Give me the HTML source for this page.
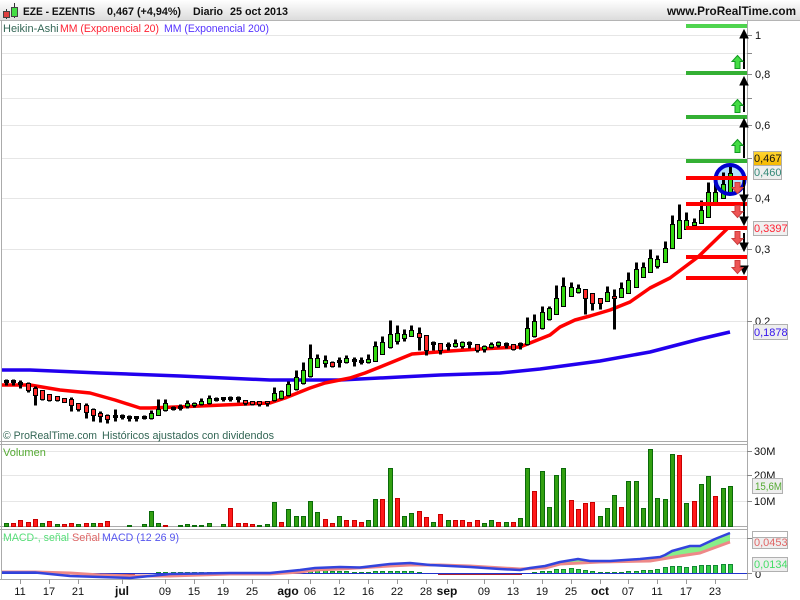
<!DOCTYPE html>
<html><head><meta charset="utf-8"><title>EZE - EZENTIS</title>
<style>html,body{margin:0;padding:0;background:#fff;width:800px;height:600px;overflow:hidden}svg{display:block}text{font-family:"Liberation Sans",sans-serif;font-size:11px;fill:#111}</style></head>
<body>
<svg width="800" height="600" viewBox="0 0 800 600" xmlns="http://www.w3.org/2000/svg">
<defs>
<linearGradient id="hd" x1="0" y1="0" x2="0" y2="1"><stop offset="0" stop-color="#fff"/><stop offset="1" stop-color="#dcdcdc"/></linearGradient>
<linearGradient id="gold" x1="0" y1="0" x2="0" y2="1"><stop offset="0" stop-color="#ffd633"/><stop offset="1" stop-color="#f5b800"/></linearGradient>
</defs>
<rect width="800" height="20" fill="url(#hd)"/>
<path d="M0 20.5H800" stroke="#b4b4b4"/>
<!-- logo -->
<path d="M6.5 9V19" stroke="#333"/><rect x="3.5" y="11.5" width="6" height="6" fill="#e04040" stroke="#444"/>
<path d="M14.5 3V18" stroke="#333"/><rect x="11.500" y="7.500" width="6" height="9" fill="#44dd44" stroke="#444"/>
<text x="23" y="15" font-weight="bold" textLength="72" lengthAdjust="spacingAndGlyphs">EZE - EZENTIS</text>
<text x="107" y="15" font-weight="bold" textLength="74" lengthAdjust="spacingAndGlyphs">0,467 (+4,94%)</text>
<text x="193" y="15" font-weight="bold" textLength="30" lengthAdjust="spacingAndGlyphs">Diario</text>
<text x="230" y="15" font-weight="bold" textLength="58" lengthAdjust="spacingAndGlyphs">25 oct 2013</text>
<text x="667" y="15" font-weight="bold" style="font-size:12px" textLength="129" lengthAdjust="spacingAndGlyphs">www.ProRealTime.com</text>
<text x="3" y="32" style="fill:#336655">Heikin-Ashi</text>
<text x="60" y="32" style="fill:#ff2233" textLength="99" lengthAdjust="spacingAndGlyphs">MM (Exponencial 20)</text>
<text x="164" y="32" style="fill:#5533ff" textLength="105" lengthAdjust="spacingAndGlyphs">MM (Exponencial 200)</text>

<!-- grid -->
<path d="M2 35.5H747M2 53.5H747M2 74.5H747M2 98.5H747M2 125.5H747M2 158.5H747M2 198.5H747M2 249.5H747M2 321.5H747M2 451.5H747M2 475.5H747M2 501.5H747M2 538.5H747" stroke="#e6e6e6"/>
<!-- panel borders -->
<path d="M1.5 20V579M747.5 20V579M0 441.5H748M0 444.5H748M0 526.5H748M0 529.5H748M0 579.5H748" stroke="#ababab"/>
<!-- ticks -->
<path d="M747 35.5H752M747 53.5H752M747 74.5H752M747 98.5H752M747 125.5H752M747 158.5H752M747 198.5H752M747 249.5H752M747 321.5H752M747 451.5H752M747 475.5H752M747 501.5H752M747 538.5H752M747 573.5H752" stroke="#888"/>
<path d="M20.5 579V584M49.5 579V584M78.5 579V584M122.5 579V584M165.5 579V584M194.5 579V584M223.5 579V584M252.5 579V584M288.5 579V584M310.5 579V584M339.5 579V584M368.5 579V584M397.5 579V584M426.5 579V584M447.5 579V584M484.5 579V584M513.5 579V584M542.5 579V584M571.5 579V584M600.5 579V584M628.5 579V584M657.5 579V584M686.5 579V584M715.5 579V584" stroke="#999"/>

<!-- MA200 -->
<path d="M2 370L30 370L100 373L180 376L270 380L340 380L400 377L440 375L500 373L540 369L600 361L650 352L700 339L730 332" fill="none" stroke="#2200ee" stroke-width="3.5" stroke-linejoin="round"/>
<!-- MA20 -->
<circle cx="730" cy="179.500" r="15" fill="#b4e2ff"/>
<path d="M2 385L30 385L60 390L90 393L115 400L140 408L150 408L200 406L270 403L285 398L310 388L325 383L350 378L365 373L385 365L412 354L450 351L480 349L520 347L530 343L550 335L560 327L575 320L590 316L610 310L630 302L650 288L670 278L698 257L728 228" fill="none" stroke="#ff0000" stroke-width="3.500" stroke-linejoin="round"/>

<!-- candles -->
<g transform="translate(.5,.5)">
<path fill="none" stroke="#000" stroke-width="3" d="M6 379V385M13 379V385M20 380V388M28 382V392M35 386V405M42 390V400M49 394V401M57 396V401M64 398V402M71 397V411M78 403V411M86 403V418M93 408V421M100 411V422M107 414V423M115 409V421M122 414V419M129 415V421M136 416V421M144 415V419M151 410V419M158 399V415M165 399V411M173 406V410M180 404V410M187 400V408M194 402V407M201 398V405M209 395V404M216 397V401M223 397V401M230 396V401M238 396V402M245 400V405M252 401V405M259 401V406M267 401V406M274 387V401M281 390V399M288 381V396M296 370V390M303 362V384M310 344V377M317 354V367M325 355V367M332 361V367M339 357V367M346 355V363M354 357V366M361 357V364M368 354V363M375 341V361M382 336V354M390 320V348M397 325V344M404 329V341M411 325V336M419 327V350M426 335V355M433 341V350M440 343V354M448 342V350M455 339V347M462 341V348M469 341V348M477 344V352M484 345V352M491 342V348M498 341V347M506 342V348M513 344V350M520 342V349M527 317V345M534 314V337M542 306V329M549 306V320M556 285V314M563 277V306M571 282V296M578 284V293M585 289V314M592 293V310M600 298V309M607 286V301M614 289V329M621 282V297M628 272V293M636 262V287M643 262V277M650 249V272M657 255V268M665 241V262M672 215V248M679 204V238M686 212V229M694 218V226M701 200V223M708 182V217M715 180V202M723 172V198M730 166V192"/>
<path fill="#000" stroke="#000" d="M4 380h4v2h-4zM11 380h4v2h-4zM18 382h4v2h-4zM113 415h4v2h-4zM120 415h4v2h-4zM127 416h4v2h-4zM134 416h4v2h-4zM142 416h4v2h-4zM171 407h4v2h-4zM178 406h4v2h-4zM214 398h4v2h-4zM221 397h4v2h-4zM228 397h4v2h-4zM236 397h4v2h-4zM337 360h4v2h-4zM352 359h4v2h-4zM359 360h4v2h-4zM431 342h4v2h-4zM446 344h4v2h-4zM467 342h4v2h-4zM504 343h4v2h-4zM518 343h4v2h-4z"/>
<path fill="#ff2a2a" stroke="#000" d="M26 383h4V390h-4zM33 388h4V395h-4zM40 390h4V399h-4zM47 394h4V400h-4zM55 396h4V400h-4zM62 398h4V402h-4zM69 399h4V405h-4zM76 403h4V409h-4zM84 405h4V412h-4zM91 409h4V415h-4zM98 413h4V416h-4zM105 415h4V419h-4zM243 400h4V403h-4zM250 401h4V404h-4zM257 401h4V404h-4zM265 401h4V403h-4zM330 362h4V366h-4zM417 333h4V337h-4zM424 335h4V350h-4zM438 343h4V350h-4zM475 344h4V350h-4zM511 344h4V349h-4zM583 289h4V298h-4zM590 293h4V303h-4zM598 298h4V303h-4zM612 296h4V298h-4z"/>
<path fill="#33d80f" stroke="#000" d="M149 413h4V418h-4zM156 409h4V415h-4zM163 403h4V410h-4zM185 403h4V406h-4zM192 403h4V405h-4zM199 401h4V404h-4zM207 398h4V403h-4zM272 393h4V400h-4zM279 391h4V398h-4zM286 384h4V395h-4zM294 377h4V389h-4zM301 370h4V383h-4zM308 358h4V376h-4zM315 358h4V367h-4zM323 360h4V363h-4zM344 358h4V362h-4zM366 359h4V362h-4zM373 346h4V361h-4zM380 342h4V354h-4zM388 334h4V347h-4zM395 333h4V341h-4zM402 334h4V338h-4zM409 330h4V336h-4zM453 343h4V346h-4zM460 342h4V346h-4zM482 346h4V349h-4zM489 344h4V347h-4zM496 342h4V345h-4zM525 328h4V344h-4zM532 321h4V336h-4zM540 312h4V328h-4zM547 308h4V319h-4zM554 298h4V314h-4zM561 286h4V306h-4zM569 287h4V296h-4zM576 288h4V292h-4zM605 292h4V301h-4zM619 288h4V297h-4zM626 280h4V293h-4zM634 269h4V287h-4zM641 267h4V277h-4zM648 258h4V272h-4zM655 259h4V266h-4zM663 248h4V262h-4zM670 224h4V248h-4zM677 220h4V238h-4zM684 220h4V229h-4zM692 222h4V225h-4zM699 210h4V223h-4zM706 192h4V217h-4zM713 192h4V202h-4zM721 184h4V198h-4zM728 173h4V192h-4z"/>
</g>

<circle cx="730" cy="179.500" r="14.500" fill="none" stroke="#0000cc" stroke-width="4"/>

<!-- support / resistance -->
<g fill="#34b034">
<rect x="686" y="24" width="61" height="4" fill="#4fd44f"/><rect x="686" y="71" width="61" height="4"/><rect x="686" y="115" width="61" height="4"/><rect x="686" y="159" width="61" height="4"/>
</g>
<g fill="#ff0000">
<rect x="686" y="176" width="61" height="4"/><rect x="686" y="202" width="61" height="4"/><rect x="686" y="226" width="61" height="4"/><rect x="686" y="255" width="61" height="4"/><rect x="686" y="276" width="61" height="4"/>
</g>

<!-- black arrows -->
<g fill="#000" stroke="#000">
<path d="M744 69V36" stroke-width="2" fill="none"/><path d="M744 30l4 8h-8z"/>
<path d="M744 112V83" stroke-width="2" fill="none"/><path d="M744 77l4 8h-8z"/>
<path d="M744 158V126" stroke-width="2" fill="none"/><path d="M744 119l4 8h-8z"/>
<path d="M744 180V197" stroke-width="2" fill="none"/><path d="M744 203l4-8h-8z"/>
<path d="M744 203V219" stroke-width="2" fill="none"/><path d="M744 225l4-8h-8z"/>
<path d="M744 233V245" stroke-width="2" fill="none"/><path d="M744 251l4-8h-8z"/>
<path d="M744 266V268" stroke-width="2" fill="none"/><path d="M744 274l4-8h-8z"/>
</g>
<!-- green arrows -->
<g fill="#44dd44" stroke="#119922">
<path d="M737.500 55.500l5.500 6h-3v7h-5v-7h-3z"/>
<path d="M737.500 99.500l5.500 6h-3v7h-5v-7h-3z"/>
<path d="M737.500 139.500l5.500 6h-3v7h-5v-7h-3z"/>
</g>
<!-- red arrows -->
<g fill="#ee5555" stroke="#cc3c3c">
<path d="M735 182.500h5v5h3l-5.500 6-5.500-6h3z"/>
<path d="M735 205.500h5v6h3l-5.500 6-5.500-6h3z"/>
<path d="M735 231.500h5v7h3l-5.500 6-5.500-6h3z"/>
<path d="M735 260.500h5v7h3l-5.500 6-5.500-6h3z"/>
</g>

<!-- axis labels -->
<text x="755" y="39">1</text>
<text x="755" y="78">0,8</text>
<text x="755" y="129">0,6</text>
<text x="755" y="202">0,4</text>
<text x="755" y="253">0,3</text>
<text x="755" y="325">0,2</text>
<rect x="753.500" y="151.500" width="28" height="14" fill="url(#gold)" stroke="#b0b0b0"/>
<text x="754" y="162">0,467</text>
<rect x="753.500" y="165.500" width="28" height="14" fill="#eee" stroke="#b0b0b0"/>
<text x="754" y="176" style="fill:#338877">0,460</text>
<rect x="753.500" y="221.500" width="34" height="14" fill="#f0f0f0" stroke="#b0b0b0"/>
<text x="754" y="232" style="fill:#ff2233">0,3397</text>
<rect x="753.500" y="324.500" width="34" height="15" fill="#eee" stroke="#b0b0b0"/>
<text x="754" y="336" style="fill:#3311ee">0,1878</text>

<text x="3" y="439" style="fill:#336655" textLength="94" lengthAdjust="spacingAndGlyphs">© ProRealTime.com</text>
<text x="102" y="439" style="fill:#336655" textLength="172" lengthAdjust="spacingAndGlyphs">Históricos ajustados con dividendos</text>

<!-- volume -->
<text x="3" y="456" style="fill:#55aa33">Volumen</text>
<g transform="translate(.5,.5)">
<path fill="#33a011" stroke="#0a6a0a" d="M4 523h4V526h-4zM40 523h4V526h-4zM55 524h4V526h-4zM76 524h4V526h-4zM91 523h4V526h-4zM127 525h4V526h-4zM142 524h4V526h-4zM149 511h4V526h-4zM156 523h4V526h-4zM178 525h4V526h-4zM185 524h4V526h-4zM192 525h4V526h-4zM199 525h4V526h-4zM207 523h4V526h-4zM221 524h4V526h-4zM257 525h4V526h-4zM265 524h4V526h-4zM272 502h4V526h-4zM286 509h4V526h-4zM294 516h4V526h-4zM301 516h4V526h-4zM308 501h4V526h-4zM315 512h4V526h-4zM337 516h4V526h-4zM366 520h4V526h-4zM373 499h4V526h-4zM388 468h4V526h-4zM402 516h4V526h-4zM409 513h4V526h-4zM431 522h4V526h-4zM446 520h4V526h-4zM482 523h4V526h-4zM489 520h4V526h-4zM504 522h4V526h-4zM518 518h4V526h-4zM525 468h4V526h-4zM540 471h4V526h-4zM547 507h4V526h-4zM554 475h4V526h-4zM561 468h4V526h-4zM598 516h4V526h-4zM605 508h4V526h-4zM612 495h4V526h-4zM626 481h4V526h-4zM634 481h4V526h-4zM641 508h4V526h-4zM648 449h4V526h-4zM655 498h4V526h-4zM663 499h4V526h-4zM670 454h4V526h-4zM684 503h4V526h-4zM699 484h4V526h-4zM706 476h4V526h-4zM721 488h4V526h-4zM728 486h4V526h-4z"/>
<path fill="#ff1a1a" stroke="#c80000" d="M11 523h4V526h-4zM18 520h4V526h-4zM26 522h4V526h-4zM33 519h4V526h-4zM47 521h4V526h-4zM62 524h4V526h-4zM69 523h4V526h-4zM84 523h4V526h-4zM98 523h4V526h-4zM105 521h4V526h-4zM163 525h4V526h-4zM228 508h4V526h-4zM236 523h4V526h-4zM243 523h4V526h-4zM250 524h4V526h-4zM279 522h4V526h-4zM323 519h4V526h-4zM330 523h4V526h-4zM344 520h4V526h-4zM352 520h4V526h-4zM359 522h4V526h-4zM380 499h4V526h-4zM395 498h4V526h-4zM417 511h4V526h-4zM424 517h4V526h-4zM438 514h4V526h-4zM453 520h4V526h-4zM460 520h4V526h-4zM467 522h4V526h-4zM475 520h4V526h-4zM496 522h4V526h-4zM511 522h4V526h-4zM532 491h4V526h-4zM569 500h4V526h-4zM576 509h4V526h-4zM583 503h4V526h-4zM590 502h4V526h-4zM619 507h4V526h-4zM677 455h4V526h-4zM692 501h4V526h-4zM713 496h4V526h-4z"/>
</g>
<text x="754" y="455">30M</text>
<text x="754" y="479">20M</text>
<text x="754" y="505">10M</text>
<rect x="752.500" y="478.500" width="30" height="15" fill="#eee" stroke="#b0b0b0"/>
<text x="755" y="490" style="fill:#55aa33" textLength="27" lengthAdjust="spacingAndGlyphs">15,6M</text>

<!-- MACD -->
<text x="3" y="541" style="fill:#55dd77" textLength="66" lengthAdjust="spacingAndGlyphs">MACD-, señal</text>
<text x="72" y="541" style="fill:#dd6666" textLength="28" lengthAdjust="spacingAndGlyphs">Señal</text>
<text x="102" y="541" style="fill:#5555ee" textLength="77" lengthAdjust="spacingAndGlyphs">MACD (12 26 9)</text>
<g transform="translate(.5,.5)">
<path fill="#33cc44" stroke="#118833" d="M156 572h4V573h-4zM163 572h4V573h-4zM171 572h4V573h-4zM178 572h4V573h-4zM185 572h4V573h-4zM192 572h4V573h-4zM199 572h4V573h-4zM207 572h4V573h-4zM308 570h4V573h-4zM315 569h4V573h-4zM323 569h4V573h-4zM330 571h4V573h-4zM337 571h4V573h-4zM344 571h4V573h-4zM352 572h4V573h-4zM359 572h4V573h-4zM366 572h4V573h-4zM373 571h4V573h-4zM380 571h4V573h-4zM388 571h4V573h-4zM395 571h4V573h-4zM402 571h4V573h-4zM409 571h4V573h-4zM417 572h4V573h-4zM532 572h4V573h-4zM540 571h4V573h-4zM547 571h4V573h-4zM554 569h4V573h-4zM561 569h4V573h-4zM569 568h4V573h-4zM576 569h4V573h-4zM583 570h4V573h-4zM590 571h4V573h-4zM598 572h4V573h-4zM605 572h4V573h-4zM612 572h4V573h-4zM619 572h4V573h-4zM626 571h4V573h-4zM634 571h4V573h-4zM641 570h4V573h-4zM648 570h4V573h-4zM655 569h4V573h-4zM663 567h4V573h-4zM670 566h4V573h-4zM677 566h4V573h-4zM684 567h4V573h-4zM692 566h4V573h-4zM699 565h4V573h-4zM706 565h4V573h-4zM713 565h4V573h-4zM721 564h4V573h-4zM728 564h4V573h-4z"/>
</g>
<path d="M438 574.500H522M100 574.500H135" stroke="#aa2233"/>
<path d="M2 573.500H747" stroke="#2233cc"/>
<path d="M530 568L545 566L560 562L578 559L590 561L610 561L640 559L660 557L665 555L672 551L690 546L700 546L715 539L730 533L730 542L700 553L680 556L650 561L600 562L560 564L530 568Z" fill="#88ee88"/>
<path d="M2 572L35 572L70 573L100 575L130 576L170 576L230 574L270 574L300 572L315 570L340 569L390 566L410 565L440 565L470 566L520 569L545 568L560 564L600 562L650 561L680 556L700 553L730 542" fill="none" stroke="#ee8888" stroke-width="3" stroke-linejoin="round"/>
<path d="M2 572.500L35 572.500L70 576L100 577L130 578L150 576L170 574L230 573L270 573L300 570L315 568L340 567L360 567.500L390 564L410 563L430 565L470 567L500 569L520 570L530 568L545 566L560 562L578 559L590 561L610 561L640 559L660 557L665 555L672 551L690 546L700 546L715 539L730 533" fill="none" stroke="#3344dd" stroke-width="2.500" stroke-linejoin="round"/>
<text x="755" y="578">0</text>
<path d="M752.500 531.500H787.500V548.500H752.500Z" fill="#fff" stroke="#b0b0b0"/>
<rect x="752.500" y="537.500" width="35" height="11" fill="#eee" stroke="#b0b0b0"/>
<text x="754" y="546" style="fill:#e06666">0,0453</text>
<rect x="752.500" y="557.500" width="35" height="14" fill="#eee" stroke="#b0b0b0"/>
<text x="754" y="568" style="fill:#44dd66">0,0134</text>

<!-- dates -->
<text x="20" y="595" text-anchor="middle">11</text>
<text x="49" y="595" text-anchor="middle">17</text>
<text x="78" y="595" text-anchor="middle">21</text>
<text x="122" y="595" text-anchor="middle" font-weight="bold" style="font-size:12px">jul</text>
<text x="165" y="595" text-anchor="middle">09</text>
<text x="194" y="595" text-anchor="middle">15</text>
<text x="223" y="595" text-anchor="middle">19</text>
<text x="252" y="595" text-anchor="middle">25</text>
<text x="288" y="595" text-anchor="middle" font-weight="bold" style="font-size:12px">ago</text>
<text x="310" y="595" text-anchor="middle">06</text>
<text x="339" y="595" text-anchor="middle">12</text>
<text x="368" y="595" text-anchor="middle">16</text>
<text x="397" y="595" text-anchor="middle">22</text>
<text x="426" y="595" text-anchor="middle">28</text>
<text x="447" y="595" text-anchor="middle" font-weight="bold" style="font-size:12px">sep</text>
<text x="484" y="595" text-anchor="middle">09</text>
<text x="513" y="595" text-anchor="middle">13</text>
<text x="542" y="595" text-anchor="middle">19</text>
<text x="571" y="595" text-anchor="middle">25</text>
<text x="600" y="595" text-anchor="middle" font-weight="bold" style="font-size:12px">oct</text>
<text x="628" y="595" text-anchor="middle">07</text>
<text x="657" y="595" text-anchor="middle">11</text>
<text x="686" y="595" text-anchor="middle">17</text>
<text x="715" y="595" text-anchor="middle">23</text>
</svg>
</body></html>
